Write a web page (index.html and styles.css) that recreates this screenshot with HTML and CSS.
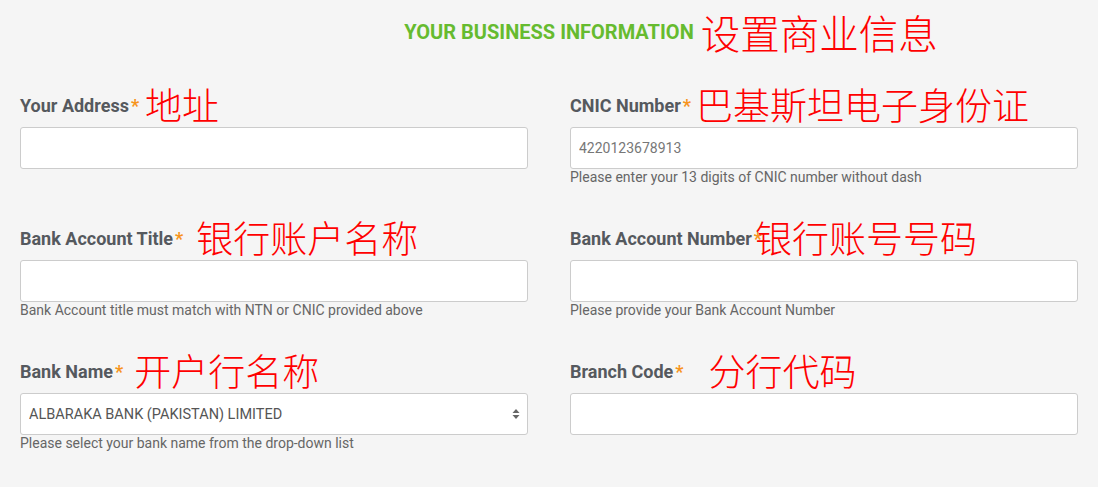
FILE: index.html
```html
<!DOCTYPE html>
<html lang="en">
<head>
  <meta charset="UTF-8">
  <title>Your Business Information</title>
  <link rel="stylesheet" href="styles.css">
</head>
<body>

  <div class="page">
    <h2 class="title"><span class="title-text">YOUR BUSINESS INFORMATION<span class="note note-title">设置商业信息</span></span></h2>

    <div class="form-grid">
      <div class="field">
        <label class="label"><span class="label-text">Your Address<span class="req">*</span></span><span class="note n-address">地址</span></label>
        <input type="text" class="control">
      </div>

      <div class="field">
        <label class="label"><span class="label-text">CNIC Number<span class="req">*</span></span><span class="note n-cnic">巴基斯坦电子身份证</span></label>
        <input type="text" class="control" placeholder="4220123678913">
        <p class="help">Please enter your 13 digits of CNIC number without dash</p>
      </div>

      <div class="field">
        <label class="label"><span class="label-text">Bank Account Title<span class="req">*</span></span><span class="note n-title">银行账户名称</span></label>
        <input type="text" class="control">
        <p class="help">Bank Account title must match with NTN or CNIC provided above</p>
      </div>

      <div class="field">
        <label class="label"><span class="label-text">Bank Account Number<span class="req">*</span></span><span class="note n-number">银行账号号码</span></label>
        <input type="text" class="control">
        <p class="help">Please provide your Bank Account Number</p>
      </div>

      <div class="field">
        <label class="label"><span class="label-text">Bank Name<span class="req">*</span></span><span class="note n-bank">开户行名称</span></label>
        <select class="control select">
          <option>ALBARAKA BANK (PAKISTAN) LIMITED</option>
        </select>
        <p class="help">Please select your bank name from the drop-down list</p>
      </div>

      <div class="field">
        <label class="label"><span class="label-text">Branch Code<span class="req">*</span></span><span class="note n-branch">分行代码</span></label>
        <input type="text" class="control">
      </div>
    </div>
  </div>

</body>
</html>
```

FILE: styles.css
```css
body {
  margin: 0;
  background-color: #f5f5f5;
  font-family: Roboto, "Liberation Sans", Arial, sans-serif;
}
.page {
  padding: 13px 20px 20px;
}
.title {
  margin: 0 0 35px;
  text-align: center;
  font-size: 20px;
  font-weight: 700;
  line-height: 38px;
  color: #66bb2f;
}
.title-text {
  position: relative;
  display: inline-block;
}
.note {
  font-family: "Noto Sans CJK SC", sans-serif;
  font-weight: 200;
  color: #ff0000;
  font-size: 37px;
  line-height: 36px;
  white-space: nowrap;
}
.note-title {
  position: absolute;
  left: 100%;
  top: 0;
  margin-left: 7px;
  font-size: 39.5px;
  line-height: 38px;
}
.form-grid {
  display: grid;
  grid-template-columns: 1fr 1fr;
  gap: 34px 42px;
}
.label {
  display: flex;
  align-items: center;
  height: 36px;
  margin-bottom: 5px;
}
.label-text {
  font-size: 18px;
  font-weight: 700;
  color: #55595e;
  line-height: 20px;
  padding-top: 3px;
}
.req {
  color: #f7941d;
  margin-left: 2px;
}
.n-address { margin-left: 6px; }
.n-cnic { margin-left: 5px; }
.n-title { margin-left: 13px; }
.n-number { margin-left: -7px; }
.n-bank { margin-left: 11px; }
.n-branch { margin-left: 25px; }
.control {
  display: block;
  box-sizing: border-box;
  width: 100%;
  height: 42px;
  margin: 0;
  padding: 0 8px;
  background-color: #fff;
  border: 1px solid #ccc;
  border-radius: 3px;
  font-family: Roboto, "Liberation Sans", Arial, sans-serif;
  font-size: 14px;
  color: #555;
  outline: none;
}
.control::placeholder {
  color: #777;
}
.select {
  appearance: none;
  -webkit-appearance: none;
  font-size: 14.5px;
  background-image: url("data:image/svg+xml;utf8,<svg xmlns='http://www.w3.org/2000/svg' width='8' height='12'><path d='M4 1 L7.5 5 H0.5 Z M4 11 L7.5 7 H0.5 Z' fill='%23666'/></svg>");
  background-repeat: no-repeat;
  background-position: right 7px center;
}
.help {
  margin: 0;
  font-size: 14px;
  line-height: 16px;
  color: #666;
}
```
